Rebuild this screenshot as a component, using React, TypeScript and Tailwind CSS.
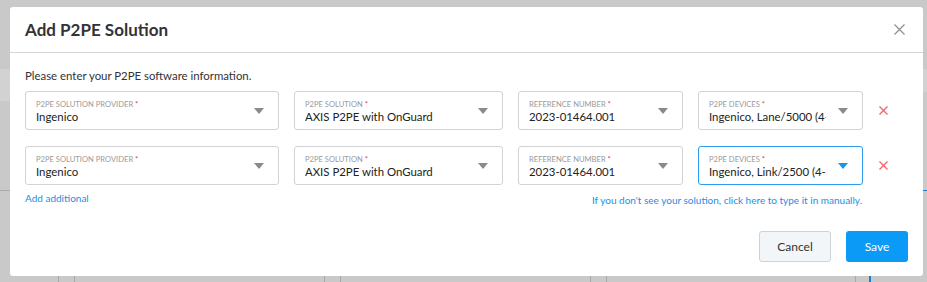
import React from 'react';

const font = { fontFamily: 'Lato, "Open Sans", sans-serif' };

type FieldProps = {
  label: string;
  value: string;
  width: string;
  focused?: boolean;
};

const Caret: React.FC<{ focused?: boolean }> = ({ focused }) => (
  <svg width="10" height="6" viewBox="0 0 10 6" className="shrink-0">
    <path d="M0 0 L10 0 L5 6 Z" fill={focused ? '#1a94ef' : '#8a8a8a'} />
  </svg>
);

const Field: React.FC<FieldProps> = ({ label, value, width, focused }) => (
  <div
    className={`${width} h-[39px] rounded-[3px] border bg-white flex items-start pl-[10px] pr-[14px] ${
      focused ? 'border-[#2c9cf0]' : 'border-[#d3d3d3]'
    }`}
  >
    <div className="flex-1 min-w-0 overflow-hidden pt-[7px]">
      <div className="text-[7.6px] leading-[10px] uppercase text-[#9a9a9a] whitespace-nowrap">
        {label} <span className="text-[#e4404a]">*</span>
      </div>
      <div className="text-[11.4px] leading-[16px] text-[#222] whitespace-nowrap overflow-hidden">{value}</div>
    </div>
    <div className="pl-[12px] self-center">
      <Caret focused={focused} />
    </div>
  </div>
);

const RemoveIcon: React.FC = () => (
  <svg width="9" height="9" viewBox="0 0 9 9">
    <path d="M0.5 0.5 L8.5 8.5 M8.5 0.5 L0.5 8.5" stroke="#f0646a" strokeWidth="1.3" />
  </svg>
);

const Row: React.FC<{ device: string; focused?: boolean }> = ({ device, focused }) => (
  <div className="flex items-center">
    <Field width="w-[254px]" label="P2PE Solution Provider" value="Ingenico" />
    <div className="w-[15px]" />
    <Field width="w-[209px]" label="P2PE Solution" value="AXIS P2PE with OnGuard" />
    <div className="w-[15px]" />
    <Field width="w-[165px]" label="Reference Number" value="2023-01464.001" />
    <div className="w-[15px]" />
    <Field width="w-[165px]" label="P2PE Devices" value={device} focused={focused} />
    <div className="pl-[16px] flex items-center">
      <RemoveIcon />
    </div>
  </div>
);

const App: React.FC = () => {
  return (
    <div className="relative w-[927px] h-[282px] bg-[#c9c9c9] overflow-hidden" style={font}>
      {/* page behind the backdrop */}
      <div className="absolute left-0 top-[69px] w-[10px] h-[32px] bg-[#d2d2d2]" />
      <div className="absolute left-0 top-[190px] w-[10px] h-px bg-[#aaaaaa]" />
      <div className="absolute right-0 top-[69px] w-[4px] h-[23px] bg-[#d2d2d2]" />
      <div className="absolute right-0 top-[190px] w-[4px] h-px bg-[#1a7fd0]" />
      <div className="absolute left-[58px] top-[276px] w-px h-[6px] bg-[#a8a8a8]" />
      <div className="absolute left-[74px] top-[276px] w-px h-[6px] bg-[#a8a8a8]" />
      <div className="absolute left-[324px] top-[276px] w-px h-[6px] bg-[#a8a8a8]" />
      <div className="absolute left-[340px] top-[276px] w-px h-[6px] bg-[#a8a8a8]" />
      <div className="absolute left-[590px] top-[276px] w-px h-[6px] bg-[#a8a8a8]" />
      <div className="absolute left-[606px] top-[276px] w-px h-[6px] bg-[#a8a8a8]" />
      <div className="absolute left-[855px] top-[276px] w-px h-[6px] bg-[#a8a8a8]" />
      <div className="absolute left-[869px] top-[276px] w-[2px] h-[6px] bg-[#1a7fd0]" />

      <div className="pt-[7px] pl-[10px] relative">
        <div className="w-[913px] h-[269px] bg-white rounded-[3px] flex flex-col">
          <div className="h-[46px] flex items-center justify-between pl-[15px] pr-[18px] border-b border-[#d6d6d6]">
            <h2 className="text-[17px] font-bold text-[#333]">Add P2PE Solution</h2>
            <svg width="11" height="11" viewBox="0 0 11 11">
              <path d="M0.5 0.5 L10.5 10.5 M10.5 0.5 L0.5 10.5" stroke="#8a8f96" strokeWidth="1.2" />
            </svg>
          </div>
          <div className="px-[15px] pt-[15px] flex-1 flex flex-col">
            <p className="text-[11.4px] leading-[16px] text-[#333]">Please enter your P2PE software information.</p>
            <div className="mt-[7px] flex flex-col gap-[16px]">
              <Row device="Ingenico, Lane/5000 (4-30204)" />
              <Row device="Ingenico, Link/2500 (4-30310)" focused />
            </div>
            <div className="flex justify-between w-[837px] mt-[6px] text-[10px] leading-[14px] text-[#1a8fe6]">
              <span>Add additional</span>
              <span className="mt-[2px]">If you don't see your solution, click here to type it in manually.</span>
            </div>
            <div className="flex justify-end gap-[15px] mt-[24px]">
              <button className="w-[72px] h-[31px] rounded-[3px] border border-[#cfd3d6] bg-[#f3f6f9] text-[12px] text-[#333]">
                Cancel
              </button>
              <button className="w-[62px] h-[31px] rounded-[3px] bg-[#0b9bf7] text-[12px] text-white">
                Save
              </button>
            </div>
          </div>
        </div>
      </div>
    </div>
  );
};

export default App;
